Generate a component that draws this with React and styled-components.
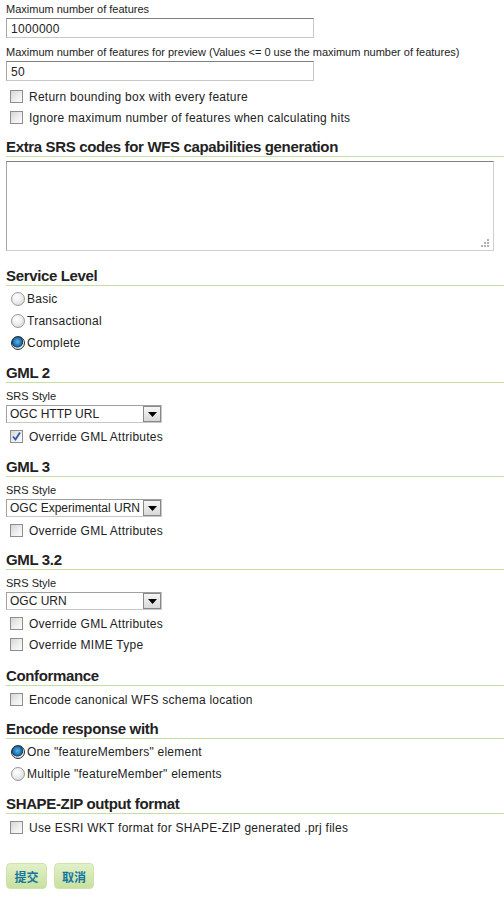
import React from 'react';
import styled, { createGlobalStyle } from 'styled-components';

const GlobalStyle = createGlobalStyle`
    body {
        margin: 0;
        background: #fff;
        font-family: "Liberation Sans", Tahoma, Arial, sans-serif;
        color: #222;
    }
`;

const Page = styled.form`
    padding: 2px 0 6px 6px;
    width: 498px;
`;

const FieldLabel = styled.label`
    display: block;
    font-size: 11px;
    line-height: 14px;
    color: #222;
    margin-top: ${props => props.$top || 0}px;
`;

const TextInput = styled.input`
    display: block;
    box-sizing: border-box;
    width: 308px;
    height: 20px;
    margin-top: 2px;
    padding: 1px 4px 0;
    border: 1px solid #c8c8c8;
    border-top-color: #808080;
    border-left-color: #a8a8a8;
    font: 12px "Liberation Sans", Tahoma, Arial, sans-serif;
    letter-spacing: 0.3px;
    color: #222;
    outline: none;
`;

const TextArea = styled.textarea`
    display: block;
    box-sizing: border-box;
    width: 488px;
    height: 90px;
    margin-top: 4px;
    border: 1px solid #d0d0d0;
    border-top-color: #808080;
    border-left-color: #a8a8a8;
    resize: none;
    outline: none;
`;

const TextAreaWrap = styled.div`
    position: relative;
    width: 488px;
`;

const Grip = styled.svg`
    position: absolute;
    right: 4px;
    bottom: 3px;
`;

const Heading = styled.h3`
    margin: ${props => props.$top || 10}px 0 0;
    font-size: 15px;
    line-height: 18px;
    font-weight: bold;
    letter-spacing: -0.35px;
    color: #222;
    border-bottom: 1px solid #c5df9f;
`;

const Row = styled.label`
    display: flex;
    align-items: center;
    height: ${props => (props.$radio ? 22 : 21)}px;
    font-size: 12px;
    letter-spacing: 0.25px;
    color: #222;
    margin-top: ${props => props.$top || 0}px;
`;

const CheckBox = styled.span`
    box-sizing: border-box;
    width: 13px;
    height: 13px;
    margin: 0 6px 0 4px;
    border: 1px solid #8d8d8d;
    background: linear-gradient(135deg, #d6d6d6 0%, #f0f0f0 60%, #fbfbfb 100%);
    display: flex;
    align-items: center;
    justify-content: center;
`;

const Radio = styled.span`
    box-sizing: border-box;
    width: 14px;
    height: 14px;
    margin: 0 2px 0 5px;
    border-radius: 50%;
    border: 1px solid ${props => (props.$on ? '#2a2a2a' : '#9a9a9a')};
    background: ${props => (props.$on
        ? 'radial-gradient(circle at 45% 40%, #5fb4e8 0%, #1a6aa8 45%, #0b3e66 55%, #e8e8e8 62%, #cfcfcf 100%)'
        : 'radial-gradient(circle at 40% 35%, #ffffff 0%, #ececec 50%, #cbcbcb 100%)')};
`;

const SelectWrap = styled.div`
    position: relative;
    width: 156px;
    margin-top: 2px;
`;

const Select = styled.select`
    display: block;
    box-sizing: border-box;
    width: 156px;
    height: 18px;
    padding: 0 0 0 3px;
    border: 1px solid #a0a0a0;
    border-right-color: #c8c8c8;
    border-bottom-color: #c8c8c8;
    appearance: none;
    background: #fff;
    font: 12px "Liberation Sans", Tahoma, Arial, sans-serif;
    color: #222;
    outline: none;
`;

const Arrow = styled.span`
    position: absolute;
    right: 1px;
    top: 1px;
    width: 16px;
    height: 14px;
    border: 1px solid #888;
    background: linear-gradient(#f6f6f6, #d8d8d8);
    display: flex;
    align-items: center;
    justify-content: center;
    pointer-events: none;
`;

const Buttons = styled.div`
    display: flex;
    gap: 7px;
    margin-top: 25px;
`;

const Button = styled.button`
    width: ${props => props.$w || 40}px;
    height: 26px;
    border: 1px solid #cfe3ad;
    border-radius: 4px;
    background: linear-gradient(#e2f0c9, #c7e09e);
    color: #1476a0;
    font: bold 12px "Noto Sans CJK SC", sans-serif;
    padding: 0;
`;

const Check = ({ on }) => (
    <CheckBox>
        {on && (
            <svg width="11" height="11" viewBox="0 0 11 11">
                <path d="M2 5.5 L4.5 8.5 L9 1.5" fill="none" stroke="#2a5aa8" strokeWidth="1.8" />
            </svg>
        )}
    </CheckBox>
);

const SrsSelect = ({ value }) => (
    <SelectWrap>
        <Select defaultValue={value}>
            <option>{value}</option>
        </Select>
        <Arrow>
            <svg width="9" height="5" viewBox="0 0 9 5"><path d="M0 0 H9 L4.5 5 Z" fill="#000" /></svg>
        </Arrow>
    </SelectWrap>
);

const App = () => (
    <>
        <GlobalStyle />
        <Page>
            <FieldLabel>Maximum number of features</FieldLabel>
            <TextInput defaultValue="1000000" />
            <FieldLabel $top={7}>Maximum number of features for preview (Values &lt;= 0 use the maximum number of features)</FieldLabel>
            <TextInput defaultValue="50" />
            <Row $top={5}><Check />Return bounding box with every feature</Row>
            <Row><Check />Ignore maximum number of features when calculating hits</Row>

            <Heading>Extra SRS codes for WFS capabilities generation</Heading>
            <TextAreaWrap>
                <TextArea />
                <Grip width="10" height="10" viewBox="0 0 10 10">
                    <g fill="#b0b0b0">
                        <rect x="7" y="1" width="2" height="2" />
                        <rect x="4" y="4" width="2" height="2" />
                        <rect x="7" y="4" width="2" height="2" />
                        <rect x="1" y="7" width="2" height="2" />
                        <rect x="4" y="7" width="2" height="2" />
                        <rect x="7" y="7" width="2" height="2" />
                    </g>
                </Grip>
            </TextAreaWrap>

            <Heading $top={16}>Service Level</Heading>
            <Row $radio $top={2}><Radio />Basic</Row>
            <Row $radio><Radio />Transactional</Row>
            <Row $radio><Radio $on />Complete</Row>

            <Heading>GML 2</Heading>
            <FieldLabel $top={6}>SRS Style</FieldLabel>
            <SrsSelect value="OGC HTTP URL" />
            <Row $top={3}><Check on />Override GML Attributes</Row>

            <Heading $top={11}>GML 3</Heading>
            <FieldLabel $top={6}>SRS Style</FieldLabel>
            <SrsSelect value="OGC Experimental URN" />
            <Row $top={3}><Check />Override GML Attributes</Row>

            <Heading $top={10}>GML 3.2</Heading>
            <FieldLabel $top={6}>SRS Style</FieldLabel>
            <SrsSelect value="OGC URN" />
            <Row $top={3}><Check />Override GML Attributes</Row>
            <Row><Check />Override MIME Type</Row>

            <Heading $top={12}>Conformance</Heading>
            <Row $top={3}><Check />Encode canonical WFS schema location</Row>

            <Heading $top={10}>Encode response with</Heading>
            <Row $radio $top={2}><Radio $on />One "featureMembers" element</Row>
            <Row $radio><Radio />Multiple "featureMember" elements</Row>

            <Heading $top={10}>SHAPE-ZIP output format</Heading>
            <Row $top={3}><Check />Use ESRI WKT format for SHAPE-ZIP generated .prj files</Row>

            <Buttons>
                <Button type="button" $w={41}>提交</Button>
                <Button type="button" $w={40}>取消</Button>
            </Buttons>
        </Page>
    </>
);

export default App;
